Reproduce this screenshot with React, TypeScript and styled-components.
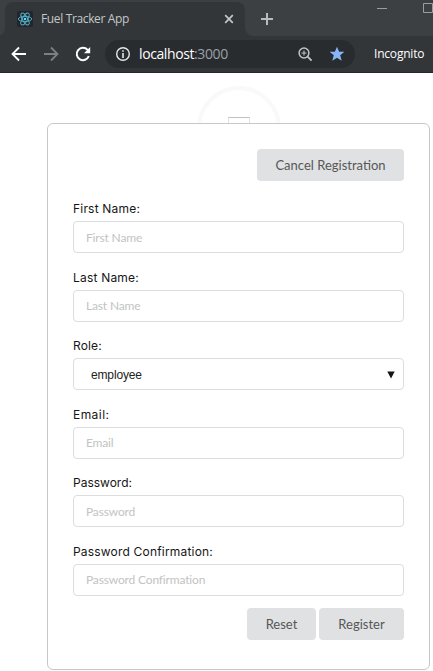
import React from 'react';
import styled, { createGlobalStyle } from 'styled-components';

const GlobalStyle = createGlobalStyle`
  * { box-sizing: border-box; }
  html, body { margin: 0; background: #fff; overflow: hidden; }
`;

const Window = styled.div`
  width: 433px;
  height: 671px;
  overflow: hidden;
  background: #fff;
`;

const TabStrip = styled.div`
  display: flex;
  height: 36px;
  padding: 2px 0 0 5px;
  background: #3c4043;
  overflow: hidden;
`;

const Tab = styled.div`
  position: relative;
  display: flex;
  align-items: center;
  width: 240px;
  height: 34px;
  padding: 0 11px 0 12px;
  border-radius: 8px 8px 0 0;
  background: #323639;
  &::before, &::after {
    content: '';
    position: absolute;
    bottom: 0;
    width: 8px;
    height: 8px;
  }
  &::before {
    left: -8px;
    background: radial-gradient(circle at 0 0, transparent 7.5px, #323639 8px);
  }
  &::after {
    right: -8px;
    background: radial-gradient(circle at 100% 0, transparent 7.5px, #323639 8px);
  }
`;

const TabTitle = styled.span`
  flex: 1;
  margin-left: 8px;
  font: 12px/16px 'Open Sans', sans-serif;
  letter-spacing: -0.36px;
  color: #c4c7c9;
  white-space: nowrap;
`;

const NewTab = styled.div`
  display: flex;
  align-items: center;
  height: 34px;
  margin-left: 15px;
`;

const WindowControls = styled.div`
  display: flex;
  gap: 36px;
  margin: 1px 0 0 103px;
`;

const Toolbar = styled.div`
  display: flex;
  align-items: center;
  height: 37px;
  padding-left: 11px;
  background: #323639;
  border-bottom: 1px solid #26292b;
`;

const NavButtons = styled.div`
  display: flex;
  gap: 16px;
  width: 94px;
`;

const AddressBar = styled.div`
  display: flex;
  align-items: center;
  width: 250px;
  height: 28px;
  padding: 0 10px;
  border-radius: 14px;
  background: #282c2f;
`;

const Url = styled.span`
  flex: 1;
  margin-left: 8px;
  font: 14px/20px 'Open Sans', sans-serif;
  letter-spacing: -0.4px;
  color: #9aa0a6;
  b { font-weight: 400; color: #fff; }
`;

const AddressActions = styled.div`
  display: flex;
  align-items: center;
  gap: 16px;
`;

const Incognito = styled.span`
  margin-left: 19px;
  font: 12px/16px 'Open Sans', sans-serif;
  letter-spacing: -0.2px;
  color: #fff;
`;

const Page = styled.main`
  position: relative;
  height: 598px;
  padding: 50px 3px 0 47px;
`;

const Avatar = styled.div`
  position: absolute;
  left: 197px;
  top: 13px;
  display: flex;
  justify-content: center;
  width: 84px;
  height: 84px;
  padding-top: 27px;
  border: 4px solid #f9f9f9;
  border-radius: 50%;
`;

const AvatarImage = styled.div`
  width: 22px;
  height: 22px;
  border: 1px solid #c0c0c0;
  border-left-color: #e2e2e2;
  border-right-color: #e2e2e2;
`;

const Panel = styled.form`
  position: relative;
  height: 547px;
  padding: 25px 25px 0;
  border: 1px solid #c6c7c8;
  border-radius: 6px;
  background: #fff;
`;

const Actions = styled.div<{ $top?: number }>`
  display: flex;
  justify-content: flex-end;
  gap: 3px;
  margin-top: ${({ $top = 0 }) => $top}px;
`;

const Button = styled.button<{ $width: number }>`
  width: ${({ $width }) => $width}px;
  height: 32px;
  padding: 0 0 1px;
  border: 0;
  border-radius: 4px;
  background: #e0e1e2;
  color: #565758;
  font: 13px/20px Lato, sans-serif;
  letter-spacing: 0;
  white-space: nowrap;
`;

const Fields = styled.div`
  display: grid;
  grid-auto-rows: 52.5px;
  gap: 16px;
  margin-top: 20px;
`;

const Field = styled.div`
  display: flex;
  flex-direction: column;
`;

const Label = styled.label<{ $tracking: number }>`
  height: 20px;
  font: 400 12px/16px Inter, sans-serif;
  letter-spacing: ${({ $tracking }) => $tracking}px;
  color: #161616;
`;

const Input = styled.input`
  width: 100%;
  height: 32px;
  padding: 0 12px;
  border: 1px solid #dcddde;
  border-radius: 4px;
  background: #fff;
  outline: 0;
  font: 12px Lato, sans-serif;
  letter-spacing: -0.16px;
  &::placeholder { color: #c2c3c3; opacity: 1; }
`;

const SelectBox = styled.div`
  display: flex;
  align-items: center;
  justify-content: space-between;
  height: 32px;
  padding: 1px 8px 0 17px;
  border: 1px solid #dcddde;
  border-radius: 4px;
  font: 12px/16px 'Liberation Sans', Arial, sans-serif;
  letter-spacing: -0.15px;
  color: #222;
`;

const ReactLogo = () => (
  <svg width="16" height="16" viewBox="0 0 16 16">
    <rect width="16" height="16" rx="2" fill="#20262b" />
    <g fill="none" stroke="#58b5cf" strokeWidth=".9">
      <ellipse cx="8" cy="8" rx="6.7" ry="2.6" />
      <ellipse cx="8" cy="8" rx="6.7" ry="2.6" transform="rotate(60 8 8)" />
      <ellipse cx="8" cy="8" rx="6.7" ry="2.6" transform="rotate(120 8 8)" />
    </g>
    <circle cx="8" cy="8" r="1.3" fill="#61dafb" />
  </svg>
);

const Arrow = ({ color, flip }: { color: string; flip?: boolean }) => (
  <svg width="16" height="16" viewBox="0 0 16 16" fill="none" stroke={color} strokeWidth="1.8">
    <path d={flip ? 'M1 8h13M8 1.5 14.5 8 8 14.5' : 'M15 8H2M8 1.5 1.5 8 8 14.5'} />
  </svg>
);

const fields = [
  { label: 'First Name:', placeholder: 'First Name', tracking: 0.2 },
  { label: 'Last Name:', placeholder: 'Last Name', tracking: 0.2 },
  { label: 'Role:', tracking: 0.15 },
  { label: 'Email:', placeholder: 'Email', tracking: 0.45 },
  { label: 'Password:', placeholder: 'Password', tracking: 0 },
  { label: 'Password Confirmation:', placeholder: 'Password Confirmation', tracking: 0.19 },
];

export default function App() {
  return (
    <Window>
      <GlobalStyle />
      <TabStrip>
        <Tab>
          <ReactLogo />
          <TabTitle>Fuel Tracker App</TabTitle>
          <svg width="10" height="10" viewBox="0 0 10 10" stroke="#c4c7c9" strokeWidth="1.7">
            <path d="M1.2 1.2l7.6 7.6M8.8 1.2 1.2 8.8" />
          </svg>
        </Tab>
        <NewTab>
          <svg width="14" height="14" viewBox="0 0 14 14" stroke="#b9bcbe" strokeWidth="2">
            <path d="M7 1v12M1 7h12" />
          </svg>
        </NewTab>
        <WindowControls>
          <svg width="10" height="12" viewBox="0 0 10 12" stroke="#9b9da0">
            <path d="M0 5.5h10" />
          </svg>
          <svg width="10" height="12" viewBox="0 0 10 12" fill="none" stroke="#9b9da0">
            <path d="M.5.5h9v9h-9z" />
          </svg>
        </WindowControls>
      </TabStrip>
      <Toolbar>
        <NavButtons>
          <Arrow color="#fff" />
          <Arrow color="#7d8083" flip />
          <svg width="16" height="16" viewBox="0 0 16 16" fill="none">
            <path d="M13.8 10A6.2 6.2 0 1 1 12.6 3.8L14 5.2" stroke="#fff" strokeWidth="2" />
            <path d="M15.2 1v6.3H9z" fill="#fff" />
          </svg>
        </NavButtons>
        <AddressBar>
          <svg width="16" height="16" viewBox="0 0 16 16" fill="none" stroke="#e6e8e9">
            <circle cx="8" cy="8" r="6.3" strokeWidth="1.4" />
            <path d="M8 4.2v1.6M8 7v5" strokeWidth="1.6" />
          </svg>
          <Url><b>localhost</b>:3000</Url>
          <AddressActions>
            <svg width="16" height="16" viewBox="0 0 16 16" fill="none" stroke="#c1c4c6">
              <circle cx="7" cy="7" r="4.9" strokeWidth="1.5" />
              <path d="M10.6 10.6l4 4" strokeWidth="1.8" />
              <path d="M7 4.5v5M4.5 7h5" strokeWidth="1.1" />
            </svg>
            <svg width="16" height="16" viewBox="0 0 16 16" fill="#8ab4f8">
              <path d="M8 .8l2.1 5h5.3l-4.2 3.5 1.5 5.4L8 11.7l-4.7 3 1.5-5.4L.6 5.8h5.3z" />
            </svg>
          </AddressActions>
        </AddressBar>
        <Incognito>Incognito</Incognito>
      </Toolbar>
      <Page>
        <Avatar><AvatarImage /></Avatar>
        <Panel>
          <Actions>
            <Button type="button" $width={147}>Cancel Registration</Button>
          </Actions>
          <Fields>
            {fields.map(({ label, placeholder, tracking }) => (
              <Field key={label}>
                <Label $tracking={tracking}>{label}</Label>
                {placeholder ? (
                  <Input placeholder={placeholder} />
                ) : (
                  <SelectBox>
                    employee
                    <svg width="8" height="8" viewBox="0 0 8 8"><path d="M.3.5h7.4L4 7.6z" fill="#151515" /></svg>
                  </SelectBox>
                )}
              </Field>
            ))}
          </Fields>
          <Actions $top={12}>
            <Button type="button" $width={69}>Reset</Button>
            <Button type="button" $width={85}>Register</Button>
          </Actions>
        </Panel>
      </Page>
    </Window>
  );
}
